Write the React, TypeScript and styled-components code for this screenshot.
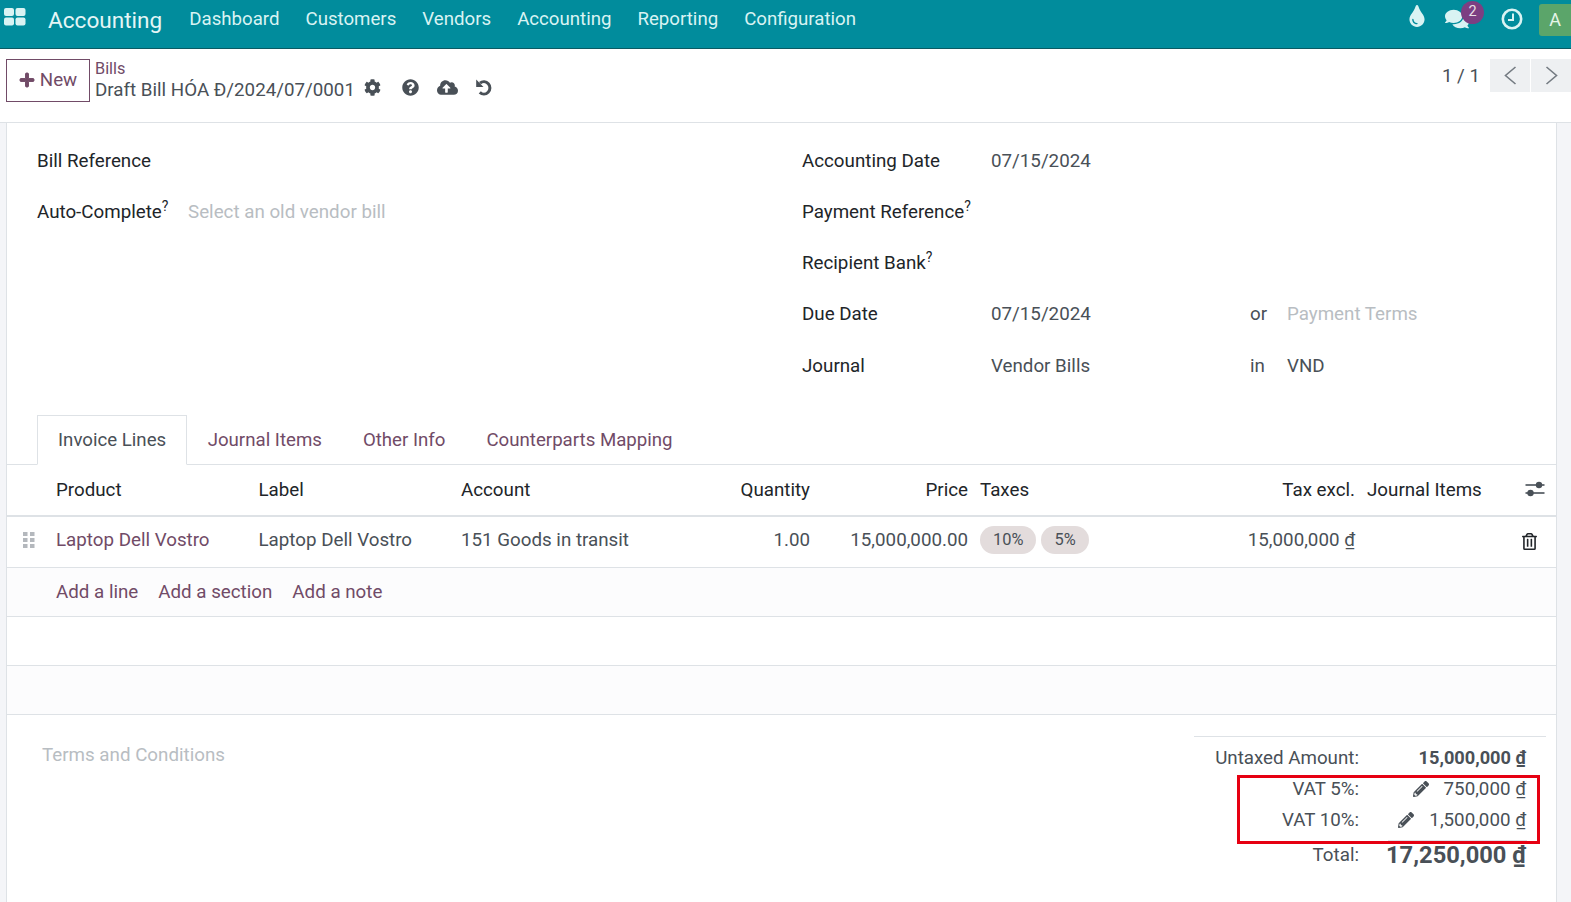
import styled, { createGlobalStyle } from "styled-components";
import {
  FaCloudUploadAlt,
  FaCog,
  FaComments,
  FaPencilAlt,
  FaPlus,
  FaQuestionCircle,
  FaRegTrashAlt,
  FaTint,
} from "react-icons/fa";

const purple = "#714b67";
const text = "#495057";
const line = "#dee2e6";

const GlobalStyle = createGlobalStyle`
  html, body {
    margin: 0;
    padding: 0;
    background: #fff;
  }
  * {
    box-sizing: border-box;
  }
  body {
    font-family: Roboto, "Liberation Sans", sans-serif;
    font-size: 18.76px;
    color: ${text};
  }
`;

function GridIcon() {
  return (
    <svg width="22" height="18" viewBox="0 0 22 18" fill="#d9f3f3">
      <rect x="0" y="0" width="10" height="8" rx="2" />
      <rect x="11.5" y="0" width="10" height="8" rx="2" />
      <rect x="0" y="9.5" width="10" height="8" rx="2" />
      <rect x="11.5" y="9.5" width="10" height="8" rx="2" />
    </svg>
  );
}

function ClockIcon() {
  return (
    <svg width="22" height="22" viewBox="0 0 22 22" fill="none" stroke="#d9f3f3">
      <circle cx="11" cy="11" r="9.2" strokeWidth="2.6" />
      <path d="M12 5.5V12H7" strokeWidth="2" />
    </svg>
  );
}

function UndoIcon() {
  return (
    <svg width="16" height="17" viewBox="0 0 16 17" fill={text}>
      <path d="M4 4.2A6 6.2 0 1 1 3.8 13.4" fill="none" stroke={text} strokeWidth="3" />
      <path d="M0.2 0.6V8H7.5Z" />
    </svg>
  );
}

function ChevronIcon({ flip }: { flip?: boolean }) {
  return (
    <svg width="13" height="19" viewBox="0 0 13 19" fill="none" stroke="#747b82" strokeWidth="1.6">
      <path d={flip ? "M1.5 1L11.5 9.5L1.5 18" : "M11.5 1L1.5 9.5L11.5 18"} />
    </svg>
  );
}

function GripIcon() {
  return (
    <svg width="12" height="16" viewBox="0 0 12 16" fill="#b4b8bd">
      {[0, 6, 12].map((y) => (
        <g key={y}>
          <rect x="0" y={y} width="4.5" height="4" />
          <rect x="7" y={y} width="4.5" height="4" />
        </g>
      ))}
    </svg>
  );
}

function SlidersIcon() {
  return (
    <svg width="20" height="20" viewBox="0 0 20 20" fill="#495057">
      <rect x="0.5" y="4.2" width="19" height="1.6" />
      <rect x="0.5" y="12.2" width="19" height="1.6" />
      <circle cx="14" cy="5" r="3.2" />
      <circle cx="5.5" cy="13" r="3.2" />
    </svg>
  );
}

export default function App() {
  return (
    <Page>
      <GlobalStyle />
      <NavBar>
        <AppsButton>
          <GridIcon />
        </AppsButton>
        <Brand>Accounting</Brand>
        <NavItem>Dashboard</NavItem>
        <NavItem>Customers</NavItem>
        <NavItem>Vendors</NavItem>
        <NavItem>Accounting</NavItem>
        <NavItem>Reporting</NavItem>
        <NavItem>Configuration</NavItem>
        <NavRight>
          <DropSlot>
            <FaTint size={22} />
          </DropSlot>
          <Chat>
            <FaComments size={24} />
            <Badge>2</Badge>
          </Chat>
          <ClockSlot>
            <ClockIcon />
          </ClockSlot>
          <Avatar>A</Avatar>
        </NavRight>
      </NavBar>

      <ControlPanel>
        <NewButton>
          <FaPlus size={16} strokeWidth={30} />
          New
        </NewButton>
        <Breadcrumbs>
          <BreadcrumbLink>Bills</BreadcrumbLink>
          <TitleRow>
            <span>Draft Bill HÓA Đ/2024/07/0001</span>
            <TitleIcons>
              <GearSlot>
                <FaCog size={17} />
              </GearSlot>
              <FaQuestionCircle size={17} />
              <FaCloudUploadAlt size={21} />
              <UndoIcon />
            </TitleIcons>
          </TitleRow>
        </Breadcrumbs>
        <Pager>
          <PagerValue>1 / 1</PagerValue>
          <PagerButton>
            <ChevronIcon />
          </PagerButton>
          <PagerButton>
            <ChevronIcon flip />
          </PagerButton>
        </Pager>
      </ControlPanel>

      <Sheet>
        <FormGroups>
          <FormColumn>
            <FieldRow>
              <FieldLabel>Bill Reference</FieldLabel>
            </FieldRow>
            <FieldRow>
              <FieldLabel>
                Auto-Complete<sup>?</sup>
              </FieldLabel>
              <Placeholder>Select an old vendor bill</Placeholder>
            </FieldRow>
          </FormColumn>
          <FormColumn>
            <FieldRow>
              <WideLabel>Accounting Date</WideLabel>
              <FieldValue>07/15/2024</FieldValue>
            </FieldRow>
            <FieldRow>
              <WideLabel>
                Payment Reference<sup>?</sup>
              </WideLabel>
            </FieldRow>
            <FieldRow>
              <WideLabel>
                Recipient Bank<sup>?</sup>
              </WideLabel>
            </FieldRow>
            <FieldRow>
              <WideLabel>Due Date</WideLabel>
              <FieldValue>07/15/2024</FieldValue>
              <Joiner>or</Joiner>
              <Placeholder>Payment Terms</Placeholder>
            </FieldRow>
            <FieldRow>
              <WideLabel>Journal</WideLabel>
              <FieldValue>Vendor Bills</FieldValue>
              <Joiner>in</Joiner>
              <span>VND</span>
            </FieldRow>
          </FormColumn>
        </FormGroups>

        <Tabs>
          <Tab active>Invoice Lines</Tab>
          <Tab>Journal Items</Tab>
          <Tab>Other Info</Tab>
          <Tab>Counterparts Mapping</Tab>
        </Tabs>

        <HeadRow>
          <span />
          <span>Product</span>
          <span>Label</span>
          <span>Account</span>
          <RightCell>Quantity</RightCell>
          <RightCell>Price</RightCell>
          <TaxCell>Taxes</TaxCell>
          <RightCell>Tax excl.</RightCell>
          <JournalCell>Journal Items</JournalCell>
          <ActionCell inset={11}>
            <SlidersIcon />
          </ActionCell>
        </HeadRow>
        <BodyRow>
          <GripCell>
            <GripIcon />
          </GripCell>
          <ProductLink>Laptop Dell Vostro</ProductLink>
          <span>Laptop Dell Vostro</span>
          <span>151 Goods in transit</span>
          <RightCell>1.00</RightCell>
          <RightCell>15,000,000.00</RightCell>
          <TaxCell>
            <TaxBadge>10%</TaxBadge>
            <TaxBadge>5%</TaxBadge>
          </TaxCell>
          <RightCell>
            15,000,000 <Currency>₫</Currency>
          </RightCell>
          <JournalCell />
          <TrashCell inset={18}>
            <FaRegTrashAlt size={17} color="#212529" />
          </TrashCell>
        </BodyRow>
        <AddRow>
          <AddLink>Add a line</AddLink>
          <AddLink>Add a section</AddLink>
          <AddLink>Add a note</AddLink>
        </AddRow>
        <EmptyRow />
        <EmptyRow tinted />

        <Footer>
          <Terms>Terms and Conditions</Terms>
          <Totals>
            <TotalRow>
              <TotalLabel>Untaxed Amount:</TotalLabel>
              <StrongAmount>
                15,000,000 <Currency>₫</Currency>
              </StrongAmount>
            </TotalRow>
            <TotalRow>
              <TotalLabel>VAT 5%:</TotalLabel>
              <Amount>
                <FaPencilAlt size={16} />
                <span>
                  750,000 <Currency>₫</Currency>
                </span>
              </Amount>
            </TotalRow>
            <TotalRow>
              <TotalLabel>VAT 10%:</TotalLabel>
              <Amount>
                <FaPencilAlt size={16} />
                <span>
                  1,500,000 <Currency>₫</Currency>
                </span>
              </Amount>
            </TotalRow>
            <TotalRule />
            <GrandRow>
              <TotalLabel>Total:</TotalLabel>
              <GrandAmount>
                17,250,000 <Currency>₫</Currency>
              </GrandAmount>
            </GrandRow>
            <Highlight />
          </Totals>
        </Footer>
      </Sheet>
    </Page>
  );
}

const Page = styled.div`
  width: 1571px;
  height: 902px;
  overflow: hidden;
  display: flex;
  flex-direction: column;
  background: #f4f5f8;
`;

const NavBar = styled.header`
  height: 49px;
  flex: none;
  display: flex;
  align-items: flex-start;
  padding-left: 4px;
  background: #018c9c;
  border-bottom: 1px solid #0b5a63;
  color: #d9f3f3;
`;

const AppsButton = styled.div`
  width: 44px;
  padding-top: 8px;
  display: flex;
`;

const Brand = styled.div`
  font-size: 22.6px;
  line-height: 26px;
  padding-top: 8px;
  margin-right: 14px;
  color: #e4f6f6;
`;

const NavItem = styled.div`
  font-size: 18.67px;
  line-height: 22px;
  padding: 8px 13px 0;
`;

const NavRight = styled.div`
  margin-left: auto;
  display: flex;
  align-items: flex-start;
  padding-top: 7px;
  height: 100%;
`;

const DropSlot = styled.div`
  display: flex;
  margin: -2px 17px 0 0;
`;

const Chat = styled.div`
  position: relative;
  display: flex;
`;

const ClockSlot = styled.div`
  display: flex;
  margin: 1px 16px 0 32px;
`;

const Badge = styled.span`
  position: absolute;
  top: -6px;
  right: -15px;
  width: 23px;
  height: 23px;
  border-radius: 50%;
  background: #7c3f82;
  color: #e8dfe6;
  font-size: 14.5px;
  line-height: 21px;
  text-align: center;
`;

const Avatar = styled.div`
  width: 32px;
  height: 32px;
  margin-top: -3px;
  border-radius: 3px 0 0 3px;
  background: #5ba56a;
  color: #e6f5e8;
  font-size: 18px;
  line-height: 32px;
  text-align: center;
`;

const ControlPanel = styled.div`
  height: 74px;
  flex: none;
  display: flex;
  align-items: flex-start;
  padding: 10px 0 0 6px;
  background: #fff;
  border-bottom: 1px solid ${line};
`;

const NewButton = styled.button`
  width: 84px;
  height: 43px;
  display: flex;
  align-items: center;
  justify-content: center;
  gap: 5px;
  background: #fff;
  border: 1px solid ${purple};
  color: ${purple};
  font: inherit;
  padding: 0 0 2px;
`;

const Breadcrumbs = styled.div`
  margin-left: 5px;
  display: flex;
  flex-direction: column;
`;

const BreadcrumbLink = styled.a`
  color: ${purple};
  font-size: 16.3px;
  line-height: 18px;
  margin-top: 1px;
`;

const TitleRow = styled.div`
  display: flex;
  align-items: center;
  line-height: 24px;
`;

const TitleIcons = styled.div`
  display: flex;
  align-items: center;
  gap: 18px;
  margin: -5px 0 0 9px;
`;

const GearSlot = styled.span`
  display: flex;
  margin-right: 3px;
`;

const Pager = styled.div`
  margin-left: auto;
  display: flex;
  align-items: center;
  height: 33px;
`;

const PagerValue = styled.span`
  margin-right: 9px;
`;

const PagerButton = styled.div`
  width: 40px;
  height: 33px;
  margin-left: 1px;
  display: flex;
  align-items: center;
  justify-content: center;
  background: #eef0f2;
`;

const Sheet = styled.main`
  flex: 1;
  width: 1551px;
  margin-left: 6px;
  background: #fff;
  border-left: 1px solid ${line};
  border-right: 1px solid ${line};
`;

const FormGroups = styled.div`
  height: 292px;
  display: grid;
  grid-template-columns: 765px 1fr;
  padding: 12px 0 0 30px;
`;

const FormColumn = styled.div`
  display: flex;
  flex-direction: column;
`;

const FieldRow = styled.div`
  height: 51.25px;
  flex: none;
  display: flex;
  align-items: center;

  sup {
    font-size: 14px;
    line-height: 0;
  }
`;

const FieldLabel = styled.label`
  width: 151px;
  color: #212529;
`;

const WideLabel = styled.label`
  width: 189px;
  color: #212529;
`;

const FieldValue = styled.span`
  width: 259px;
`;

const Placeholder = styled.span`
  color: #b8bdc2;
`;

const Joiner = styled.span`
  width: 37px;
`;

const Tabs = styled.nav`
  height: 50px;
  display: flex;
  padding-left: 30px;
  border-bottom: 1px solid ${line};
`;

const Tab = styled.a<{ active?: boolean }>`
  height: 50px;
  padding: 0 ${(props) => (props.active ? "20px" : "19.5px")};
  display: flex;
  align-items: center;
  font-size: 18.67px;
  background: ${(props) => (props.active ? "#fff" : "transparent")};
  color: ${(props) => (props.active ? text : purple)};
  border: 1px solid ${(props) => (props.active ? line : "transparent")};
  border-bottom-color: ${(props) => (props.active ? "#fff" : "transparent")};
`;

const columns = "49px 202.5px 202.5px 241px 108px 158px 275px 112px 146px 1fr";

const HeadRow = styled.div`
  height: 52px;
  display: grid;
  grid-template-columns: ${columns};
  align-items: center;
  color: #212529;
  border-bottom: 2px solid ${line};
`;

const BodyRow = styled.div`
  height: 51px;
  display: grid;
  grid-template-columns: ${columns};
  align-items: center;
  padding-bottom: 4px;
  border-bottom: 1px solid ${line};
`;

const RightCell = styled.span`
  text-align: right;
  white-space: nowrap;
`;

const TaxCell = styled.span`
  padding-left: 12px;
  display: flex;
  gap: 5px;
`;

const JournalCell = styled.span`
  padding-left: 12px;
  white-space: nowrap;
`;

const ActionCell = styled.span<{ inset: number }>`
  display: flex;
  justify-content: flex-end;
  padding-right: ${(props) => props.inset}px;
`;

const TrashCell = styled(ActionCell)`
  padding-top: 3px;
`;

const GripCell = styled.span`
  display: flex;
  padding-left: 16px;
`;

const ProductLink = styled.a`
  color: ${purple};
`;

const TaxBadge = styled.span`
  height: 28px;
  padding: 0 13px;
  border-radius: 14px;
  background: #e3dcdc;
  font-size: 16.4px;
  line-height: 28px;
`;

const Currency = styled.span`
  text-decoration: underline;
`;

const AddRow = styled.div`
  height: 49px;
  display: flex;
  align-items: center;
  gap: 20px;
  padding-left: 49px;
  background: #fcfcfd;
  border-bottom: 1px solid ${line};
`;

const AddLink = styled.a`
  color: ${purple};
`;

const EmptyRow = styled.div<{ tinted?: boolean }>`
  height: 49px;
  background: ${(props) => (props.tinted ? "#fcfcfd" : "#fff")};
  border-bottom: 1px solid ${line};
`;

const Footer = styled.div`
  display: flex;
  justify-content: space-between;
  padding: 21px 10px 0 35px;
`;

const Terms = styled.div`
  color: #b8bdc2;
  line-height: 38px;
`;

const Totals = styled.div`
  position: relative;
  width: 352px;
  border-top: 1px solid ${line};
  padding-top: 5px;
`;

const TotalRow = styled.div`
  height: 31px;
  display: grid;
  grid-template-columns: 165px 167px;
  align-items: center;
`;

const TotalRule = styled.div`
  width: 139px;
  height: 1px;
  margin: 4.5px 19px 0 auto;
  background: ${line};
`;

const GrandRow = styled(TotalRow)`
  height: 27px;
`;

const TotalLabel = styled.span`
  text-align: right;
`;

const StrongAmount = styled.span`
  text-align: right;
  font-size: 18.2px;
  font-weight: 700;
`;

const Amount = styled.span`
  display: flex;
  justify-content: flex-end;
  align-items: center;
  gap: 15px;
`;

const GrandAmount = styled.span`
  text-align: right;
  font-size: 23.7px;
  font-weight: 700;
`;

const Highlight = styled.div`
  position: absolute;
  left: 43px;
  top: 38px;
  width: 303px;
  height: 69px;
  border: 3px solid #e60012;
  pointer-events: none;
`;
